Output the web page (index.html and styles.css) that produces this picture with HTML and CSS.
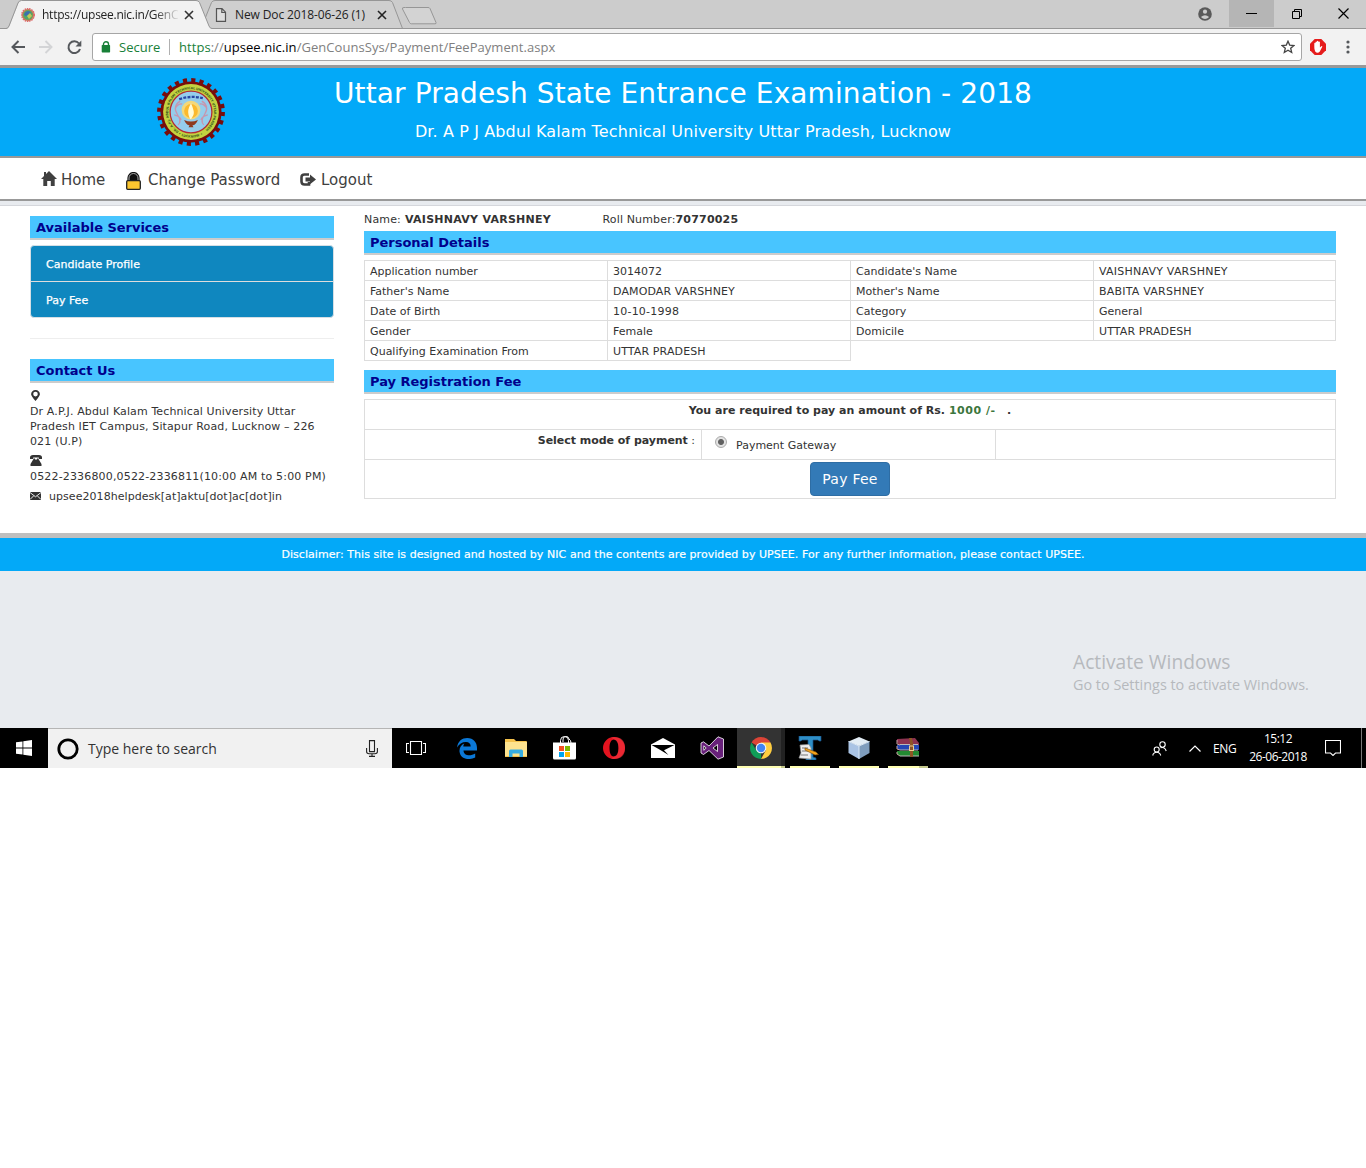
FILE: index.html
```html
<!DOCTYPE html>
<html lang="en">
<head>
<meta charset="utf-8">
<title>UPSEE 2018 - Fee Payment</title>
<link rel="stylesheet" href="styles.css">
</head>
<body>
<div class="desktop">
  <div class="tabstrip">
    <svg class="tab-shapes" width="450" height="29" viewBox="0 0 450 29">
      <path d="M201 28.500L211.500 2.500Q212.500.5 215 .5H389Q391.500.5 392.500 2.500L402.500 28.500" fill="#cfcfcf" stroke="#969696"/>
      <path d="M405.500 7.500H428Q429.500 7.500 430 8.500L436 22.500Q436.500 23.800 435 23.800H411.500Q410 23.800 409.500 22.500L402.500 9Q402 7.500 404 7.500Z" fill="#d3d3d3" stroke="#969696"/>
      <path d="M6 29Q8.500 28.500 9.500 26L18.500 3Q19.500 .5 22 .5H196Q198.500.5 199.500 2.500L209 26Q210 28.500 212 29Z" fill="#f2f2f2"/>
      <path d="M0 28.500H6Q8 28.500 9 26L18 3Q19 .5 21.500 .5H196Q198.500.5 199.500 2.500L209 26Q210 28.500 212 28.500H450" fill="none" stroke="#969696"/>
    </svg>
    <div class="tab tab-a">
      <svg width="16" height="16" viewBox="0 0 16 16"><circle cx="8" cy="8" r="6" fill="#8f9a4a" stroke="#e0696b" stroke-width="2" stroke-dasharray="1.500 .7"/><circle cx="8" cy="8" r="4.500" fill="#4fa46d"/><path d="M4 8Q5 4 9 4L11 6 6 9Z" fill="#3d70ae"/><path d="M7 9l3-3 2 3-3 3z" fill="#c2c957"/></svg>
      <span class="tab-title fade">https://upsee.nic.in/GenC</span>
      <svg width="10" height="10" viewBox="0 0 10 10"><path d="M1 1l8 8M9 1l-8 8" stroke="#333" stroke-width="1.600"/></svg>
    </div>
    <div class="tab tab-b">
      <svg width="12" height="14" viewBox="0 0 12 14"><path d="M1.500.7H7L10.500 4.200V13.300H1.500ZM6.800.7V4.500H10.500" fill="#dedede" stroke="#555" stroke-width="1.200"/></svg>
      <span class="tab-title">New Doc 2018-06-26 (1)</span>
      <svg width="10" height="10" viewBox="0 0 10 10"><path d="M1 1l8 8M9 1l-8 8" stroke="#222" stroke-width="1.600"/></svg>
    </div>
    <div class="winctl">
      <svg width="14" height="14" viewBox="0 0 14 14"><circle cx="7" cy="7" r="6.800" fill="#5a5a5a"/><circle cx="7" cy="4.700" r="2.100" fill="#ccc"/><path d="M2.900 9.900Q7 6.600 11.100 9.900Q7 14 2.900 9.900Z" fill="#ccc"/></svg>
      <span class="min"><i></i></span>
      <svg class="max" width="10" height="10" viewBox="0 0 10 10"><path d="M.5 2.500h7v7h-7zM2.500 2.500v-2h7v7h-2" fill="none" stroke="#000"/></svg>
      <svg class="close" width="11" height="11" viewBox="0 0 11 11"><path d="M.5.5l10 10M10.500.5l-10 10" stroke="#000" stroke-width="1.200"/></svg>
    </div>
  </div>
  <div class="toolbar">
    <svg width="14" height="14" viewBox="0 0 14 14"><path d="M14 7H1.500M7.500 1L1.500 7l6 6" fill="none" stroke="#55585c" stroke-width="2"/></svg>
    <svg width="14" height="14" viewBox="0 0 14 14"><path d="M0 7H12.500M6.500 1L12.500 7l-6 6" fill="none" stroke="#d3d4d6" stroke-width="1.900"/></svg>
    <svg width="15" height="15" viewBox="0 0 15 15"><path d="M13 9A5.900 5.900 0 1 1 12 3.500" fill="none" stroke="#55585c" stroke-width="2"/><path d="M14.300 .5V6.500H8.500Z" fill="#55585c"/></svg>
    <div class="omnibox">
      <svg width="10" height="12" viewBox="0 0 10 12"><path d="M2.500 5V3a2.500 2.200 0 0 1 5 0V5" fill="none" stroke="#188038" stroke-width="1.400"/><rect x=".7" y="4" width="8.400" height="7.500" rx=".7" fill="#188038"/></svg>
      <span class="secure">Secure</span>
      <span class="url"><span class="scheme">https</span>://<span class="host">upsee.nic.in</span>/GenCounsSys/Payment/FeePayment.aspx</span>
      <svg class="star" width="14" height="14" viewBox="0 0 14 14"><path d="M7 1.200L8.700 5.100 12.900 5.500 9.700 8.300 10.700 12.500 7 10.300 3.300 12.500 4.300 8.300 1.100 5.500 5.300 5.100Z" fill="none" stroke="#444" stroke-width="1.300"/></svg>
    </div>
    <svg class="stop" width="16" height="16" viewBox="0 0 16 16"><path d="M4.700 0h6.600L16 4.700v6.600L11.300 16H4.700L0 11.300V4.700Z" fill="#e51c1c"/><path d="M4.300 8V4.200q.6-.8 1.200 0V3q.7-.8 1.400 0V2.200q.8-.9 1.500 0V3q.8-.8 1.500 0V8.500l1.400-1.300q1-.4 1 .5L9.800 12.500Q7.500 15 5.200 12.500Q4.200 10.500 4.300 8Z" fill="#fff"/></svg>
    <svg class="dots" width="4" height="14" viewBox="0 0 4 14"><g fill="#55585c"><circle cx="2" cy="2" r="1.600"/><circle cx="2" cy="7" r="1.600"/><circle cx="2" cy="12" r="1.600"/></g></svg>
  </div>
  <header class="banner">
    <svg class="seal" width="70" height="70" viewBox="-35.500 -35.500 71 71">
      <circle r="32.300" fill="none" stroke="#780c0c" stroke-width="4.200" stroke-dasharray="4.200 4.256"/>
      <circle r="31" fill="#780c0c"/><circle r="28.300" fill="#c3d340"/><circle r="21.200" fill="#95cdec" stroke="#b32b36" stroke-width="1.300"/>
      <path id="ring" d="M-12.500 19.600A23.200 23.200 0 1 1 12.500 19.600" fill="none"/>
      <path id="ringb" d="M-13 22.500A26 26 0 0 0 13 22.500" fill="none"/>
      <text class="ringtext"><textPath href="#ring" textLength="116">DR. A.P.J. ABDUL KALAM TECHNICAL UNIVERSITY UTTAR PRADESH</textPath></text>
      <text class="ringtext"><textPath href="#ringb" textLength="26">• LUCKNOW •</textPath></text>
      <path d="M-11-11Q-19-6-14 2T-13 13M-16-4q4-5 7-4M-17 3q5 1 7 5M11-11Q19-6 14 2T13 13M16-4q-4-5-7-4M17 3q-5 1-7 5" fill="none" stroke="#c795ae" stroke-width="1.300"/>
      <path d="M-12-13Q0-17 12-14" fill="none" stroke="#2845a3" stroke-width="2.300" stroke-dasharray="3 1.300"/>
      <circle cy="-2" r="9.500" fill="#f4d87a"/><circle cy="-1" r="7" fill="#fbb92d"/><path d="M0-9Q-4-2-2.500 3T0 7T2.500 3T0-9Z" fill="#fffbd6"/>
      <path d="M-7 8Q0 11.500 7 8Q5 13 1.500 13.500L2.500 15.500H-2.500L-1.500 13.500Q-5 13-7 8Z" fill="#8e3a20"/>
    </svg>
    <div class="banner-text">
      <h1>Uttar Pradesh State Entrance Examination - 2018</h1>
      <h2>Dr. A P J Abdul Kalam Technical University Uttar Pradesh, Lucknow</h2>
    </div>
  </header>
  <nav class="menu">
    <svg class="home-icon" width="16" height="15" viewBox="0 0 16 15"><path d="M8 0L16 8H13.700V15H9.800V10H6.200V15H2.300V8H0L3 5V1H5V3Z" fill="#404040"/></svg>
    <span class="menu-home">Home</span>
    <svg class="lock-icon" width="15" height="18" viewBox="0 0 15 18"><path d="M3 9V6a4.500 4.500 0 0 1 9 0V9" fill="#111" stroke="#111" stroke-width="3.200"/><path d="M3 9V6a4.500 4.500 0 0 1 9 0V9" fill="none" stroke="#aaa" stroke-width="1"/><rect x=".7" y="8.700" width="13.600" height="8.600" rx="1" fill="#fcc62f" stroke="#222" stroke-width="1.300"/></svg>
    <span class="menu-password">Change Password</span>
    <svg class="logout-icon" width="16" height="13" viewBox="0 0 16 13"><path d="M9 1.500H4.500Q1.500 1.500 1.500 4.500V8.500Q1.500 11.500 4.500 11.500H9V9" fill="none" stroke="#404040" stroke-width="2.600"/><path d="M5.500 4.500H10V1.500L16 6.500 10 11.300V8.500H5.500Z" fill="#404040"/></svg>
    <span>Logout</span>
  </nav>
  <main class="page">
    <aside class="side">
      <h3>Available Services</h3>
      <ul class="services"><li>Candidate Profile</li><li>Pay Fee</li></ul>
      <hr>
      <h3>Contact Us</h3>
      <svg class="pin" width="9" height="11" viewBox="0 0 9 11"><path fill-rule="evenodd" d="M4.500 0A4.300 4.300 0 0 1 8.900 4.200Q8.900 6 4.500 11Q.1 6 .1 4.200A4.300 4.300 0 0 1 4.500 0ZM4.500 1.800A2.300 2.300 0 1 0 4.500 6.400A2.300 2.300 0 1 0 4.500 1.800Z" fill="#333"/></svg>
      <p class="address">Dr A.P.J. Abdul Kalam Technical University Uttar<br>Pradesh IET Campus, Sitapur Road, Lucknow – 226<br>021 (U.P)</p>
      <svg class="phone" width="12" height="11" viewBox="0 0 12 11"><path d="M0 4V2.500Q0 0 3 0H9Q12 0 12 2.500V4H8.800V2.500H3.200V4Z" fill="#333"/><path d="M3.800 3.500h1.200v1h2v-1h1.200L11.500 9V11H.5V9Z" fill="#333"/></svg>
      <p class="tel">0522-2336800,0522-2336811(10:00 AM to 5:00 PM)</p>
      <div class="mail"><svg width="11" height="8" viewBox="0 0 11 8"><rect width="11" height="8" fill="#333"/><path d="M0 .5L5.500 4.800 11 .5M0 7.500L3.700 3.800M11 7.500L7.300 3.800" stroke="#fff" stroke-width=".9" fill="none"/></svg><span>upsee2018helpdesk[at]aktu[dot]ac[dot]in</span></div>
    </aside>
    <section class="main">
      <div class="who"><span class="who-label">Name:</span><b class="who-name">VAISHNAVY VARSHNEY</b><span class="roll-label">Roll Number:</span><b class="roll">70770025</b></div>
      <h3>Personal Details</h3>
      <div class="details">
        <div>Application number</div><div>3014072</div><div>Candidate's Name</div><div class="caps">VAISHNAVY VARSHNEY</div>
        <div>Father's Name</div><div class="caps caps-tight">DAMODAR VARSHNEY</div><div>Mother's Name</div><div class="caps">BABITA VARSHNEY</div>
        <div>Date of Birth</div><div class="caps">10-10-1998</div><div>Category</div><div>General</div>
        <div>Gender</div><div>Female</div><div>Domicile</div><div class="caps caps-tight">UTTAR PRADESH</div>
        <div>Qualifying Examination From</div><div class="caps caps-tight">UTTAR PRADESH</div>
      </div>
      <h3 class="fee-title">Pay Registration Fee</h3>
      <div class="pay">
        <div class="amount"><b>You are required to pay an amount of Rs. <span class="green">1000 /-</span> &nbsp; .</b></div>
        <div class="mode"><div class="mode-label"><b>Select mode of payment</b> :</div><div class="mode-option"><i class="radio"></i><span>Payment Gateway</span></div><div></div></div>
        <div class="action"><button>Pay Fee</button></div>
      </div>
    </section>
  </main>
  <footer>Disclaimer: This site is designed and hosted by NIC and the contents are provided by UPSEE. For any further information, please contact UPSEE.</footer>
  <div class="watermark"><p class="wm-title">Activate Windows</p><p class="wm-text">Go to Settings to activate Windows.</p></div>
  <div class="taskbar">
    <div class="start"><svg width="16" height="16" viewBox="0 0 16 16"><path d="M0 2.300L6.500 1.400V7.500H0ZM7.300 1.300L16 0V7.500H7.300ZM0 8.400H6.500V14.600L0 13.700ZM7.300 8.400H16V16L7.300 14.700Z" fill="#fff"/></svg></div>
    <div class="search"><svg width="22" height="22" viewBox="0 0 22 22"><circle cx="11" cy="11" r="9.200" fill="none" stroke="#000" stroke-width="2.800"/></svg><span>Type here to search</span>
      <svg class="mic" width="12" height="17" viewBox="0 0 12 17"><path d="M3.500.6h5v11h-5zM.6 8v3.500q0 2.200 2.400 2.200h6q2.400 0 2.400-2.200V8M6 14v2.400M3 16.400h6" fill="none" stroke="#222" stroke-width="1.100"/></svg></div>
    <div class="taskview"><svg width="20" height="14" viewBox="0 0 20 14"><path d="M4.500.5h11v13h-11zM3 2.500H.5v9H3M17 2.500h2.500v9H17" fill="none" stroke="#fff" stroke-width="1.100"/></svg></div>
    <div class="apps">
      <div><svg width="20" height="21" viewBox="0 0 20 21"><path d="M0 9.500C1 3 5 0 10.200 0C16.500 0 20 4.500 20 10V12.500H6.500C6.800 18 13.500 18.500 18.200 15.500V19.500C12 22.500 3.500 21.500 2.500 13.500C2.200 9.500 4.500 6.800 7.300 5.600C6.600 6.600 6.300 7.600 6.300 8.600H13.700C13.700 5.500 12 4 9 4C5 4 2 6 0 9.500Z" fill="#0b78d7"/></svg></div>
      <div><svg width="22" height="18" viewBox="0 0 22 18"><path d="M0 0h9l2 2h10q1 0 1 1v15H0z" fill="#f5c24c"/><path d="M0 3h22v14H0z" fill="#fde38f"/><path d="M4 18v-6q0-1.500 1.500-1.500h11q1.500 0 1.500 1.500v6h-3.500v-3.500h-7V18z" fill="#37aee3"/></svg></div>
      <div><svg width="23" height="24" viewBox="0 0 23 24"><path d="M7.500 7V4.500a4 4 0 0 1 8 0V7M10 6V4a3 3 0 0 1 6-1q2 1 2 4" fill="none" stroke="#fff"/><path d="M0 6.500h23V22q0 1.500-1.500 1.500h-20Q0 23.500 0 22Z" fill="#fff"/><path fill="#f25022" d="M6 10h5v5H6z"/><path fill="#7fba00" d="M12 10h5v5h-5z"/><path fill="#00a4ef" d="M6 16h5v5H6z"/><path fill="#ffb900" d="M12 16h5v5h-5z"/></svg></div>
      <div><svg width="22" height="22" viewBox="0 0 22 22"><path fill-rule="evenodd" d="M11 0A11 11 0 0 1 11 22A11 11 0 0 1 11 0ZM11 2.500C8 2.500 6.500 6 6.500 11S8 19.500 11 19.500 15.500 16 15.500 11 14 2.500 11 2.500Z" fill="#e3131f"/><path d="M11 0Q22 0 22 11T11 22Q9 22 8 21.500L11 19.500Q15.500 18 15.500 11T11 2.500L8 .5Q9 0 11 0Z" fill="#f23a44" opacity=".55"/></svg></div>
      <div><svg width="24" height="20" viewBox="0 0 24 20"><path d="M0 6.500L12 0 24 6.500V20H0Z" fill="#fff"/><path d="M.5 7H23.500L13 12.300 17.500 17 8.500 11.500Z" fill="#000"/></svg></div>
      <div><svg width="24" height="24" viewBox="0 0 24 24"><path fill-rule="evenodd" d="M1 7L3.500 5.800 9 10 18 .8 23.500 3V21L18 23.200 9 14.500 3.500 18.500 1 17ZM3.800 9.800V14.300L6.200 12ZM13 12L17.500 15.500V8.500Z" fill="#68217a" stroke="#fff" stroke-width=".8"/></svg></div>
      <div class="active"><svg width="22" height="22" viewBox="0 0 22 22"><path d="M11 11L1.500 5.500A11 11 0 0 1 20.500 5.500Z" fill="#db4437"/><path d="M11 11L11 22A11 11 0 0 1 1.500 5.500L6 13Z" fill="#0f9d58"/><path d="M11 5.500H20.500A11 11 0 0 1 11 22L16 13Z" fill="#ffcd40"/><circle cx="11" cy="11" r="5.300" fill="#f4f4f4"/><circle cx="11" cy="11" r="4.200" fill="#4285f4"/></svg></div>
      <div class="running"><svg width="24" height="24" viewBox="0 0 24 24"><path d="M1 0H23V5H21L20 4H15V21L18 22V24H8V22L10 21V4H4L3 5H1Z" fill="#2e8fc7" stroke="#174f84" stroke-width=".7"/><path d="M2 9L11 8.500 13 12V23L1 22 3 17Z" fill="#eee" stroke="#999" stroke-width=".7"/><path d="M4 12h6M4 15h7M3 19h7" stroke="#777"/><path d="M7 12L18 16 20.500 18.500 17 19 7 14Z" fill="#f5a51c" stroke="#7a4708" stroke-width=".6"/></svg></div>
      <div class="running"><svg width="22" height="24" viewBox="0 0 22 24"><path d="M11 1L21.500 5.500 11 10 .5 5.500Z" fill="#e3edf5"/><path d="M.5 5.500L11 10V23L.5 17Z" fill="#a9c3e4"/><path d="M21.500 5.500L11 10V23L21.500 17Z" fill="#7f9dbd"/><path d="M.5 5.500L11 10 21.500 5.500M11 10V23" fill="none" stroke="#d8e6f5"/></svg></div>
      <div class="running grouped"><svg width="24" height="20" viewBox="0 0 24 20"><path d="M1 1L19 0 23 5V7H3L1 4Z" fill="#8d3350"/><path d="M1 7H23V12H3L1 10Z" fill="#2447b4"/><path d="M1 13H23V18H4L1 16Z" fill="#238a32"/><path d="M4 6.500H22M4 12H22M4 18H23" stroke="#b9b9b9"/><path d="M1 2V6L4 7M1 8V11L4 12M1 14V16L4 18" fill="none" stroke="#c8a4a4"/><path d="M13 0H16L17 5V19H14V5Z" fill="#8e5526"/><rect x="13.500" y="8" width="4" height="4.500" fill="none" stroke="#e9cf93"/></svg></div>
    </div>
    <div class="tray">
      <svg width="15" height="15" viewBox="0 0 15 15"><g fill="none" stroke="#fff" stroke-width="1.100"><circle cx="10.500" cy="3.500" r="2.700"/><circle cx="4.700" cy="8.500" r="2.500"/><path d="M.7 14.500q.8-3.200 4-3.200t4 3.200M8.500 6.800q4.300-1.200 5.700 3.200"/></g></svg>
      <svg class="chev" width="12" height="7" viewBox="0 0 12 7"><path d="M.5 6.500L6 1l5.500 5.500" fill="none" stroke="#fff" stroke-width="1.200"/></svg>
      <span class="lang">ENG</span>
      <div class="clock">15:12<br>26-06-2018</div>
      <svg class="note" width="16" height="16" viewBox="0 0 16 16"><path d="M.5.5h15v12.500H10.500L8 15.500 5.500 13H.5Z" fill="none" stroke="#fff" stroke-width="1.100"/></svg>
      <i class="peek"></i>
    </div>
  </div>
</div>
</body>
</html>
```
FILE: styles.css
```css
*{box-sizing:border-box}
body{margin:0;background:#fff;font:11px/15px "DejaVu Sans",sans-serif;color:#333}
svg{display:block;flex:none}
h1,h2,h3,p,ul{margin:0;padding:0;font-weight:400}
.desktop{height:768px;background:#e8ebef;display:flex;flex-direction:column;position:relative;white-space:nowrap}

/* browser window */
.tabstrip{height:29px;background:#ccc;border-bottom:1px solid #969696;position:relative;display:flex}
.tab-shapes{position:absolute;left:0;top:0}
.tab{display:flex;align-items:center;position:relative;height:29px}
.tab-a{margin-left:20px;width:176px}
.tab-b{margin-left:19px;width:175px}
.tab-title{font:12px/16px "Open Sans",sans-serif;letter-spacing:-.12px;color:#222;margin-left:8px;width:142px;overflow:hidden}
.tab-a .tab-title{margin-left:6px;letter-spacing:-.25px}
.fade{-webkit-mask-image:linear-gradient(90deg,#000 112px,transparent 138px);mask-image:linear-gradient(90deg,#000 112px,transparent 138px)}
.winctl{margin-left:auto;display:flex;align-items:center;height:27px;padding-right:17px}
.min{width:45px;height:27px;background:#b5b5b5;margin:0 18px 0 17px;display:flex;align-items:center;justify-content:center}
.min i{width:11px;height:1px;background:#000}
.close{margin-left:36px}
.toolbar{height:39px;background:#f2f2f2;border-bottom:3px solid #999;display:flex;align-items:center;gap:14px;padding:0 16px 0 11px}
.omnibox{display:flex;align-items:center;flex:1;height:28px;background:#fff;border:1px solid #a6a6a6;border-radius:3px;margin-left:-4px;padding:0 6px 0 8px;font:13px/18px "Open Sans",sans-serif}
.secure{color:#188038;margin-left:8px;width:51px;border-right:1px solid #b0b0b0;line-height:16px}
.url{margin-left:9px;color:#808080;letter-spacing:.05px}
.scheme{color:#188038}
.host{color:#000}
.star{margin-left:auto}
.stop{margin-left:-6px}
.dots{margin-left:6px}

/* site header */
.banner{height:90px;background:#03a9f8;border-bottom:2px solid #999;color:#fff;display:grid;grid-template-columns:226px 1fr 226px}
.seal{margin:9px 0 0 156px}
.ringtext{font-size:3.300px;font-weight:700;fill:#3b5b1d}
.banner-text{text-align:center}
h1{font-size:28px;line-height:34px;letter-spacing:.11px;padding-top:9px}
h2{font-size:16px;line-height:20px;letter-spacing:.12px;margin-top:11px}
.menu{height:43px;background:#fff;border-bottom:2px solid #999;display:flex;align-items:center;padding:2px 0 0 41px;font-size:15px;color:#404040}
.menu .home-icon{margin-top:-2px}
.menu .lock-icon{margin-top:2px}
.menu span{margin:2px 0 0 5px}
.menu .menu-home{width:65px;margin-left:4px}
.menu .menu-password{margin-left:7px;width:152px}

/* page body */
.page{height:328px;margin-top:4px;background:#fff;border-top:1px solid #d5d7dc;display:flex;padding-left:30px;gap:30px}
h3{height:24px;background:#48c5ff;border-bottom:2px solid #ccc;color:#00008b;font-size:13px;line-height:23px;font-weight:700;padding-left:6px;letter-spacing:-.02px}
.side{width:304px;padding-top:10px}
.services{margin-top:5px;border:1px solid #d5dfe5;border-radius:4px;background:#0f87bf;color:#fff;list-style:none;overflow:hidden;-webkit-text-stroke:.25px #fff}
.services li{height:35px;padding:11px 0 0 15px}
.services li+li{height:36px;border-top:1px solid #ddd}
hr{border:0;height:1px;background:#eee;margin:20px 0}
.pin{margin:7px 0 0 1px}
.address{margin-top:3px;letter-spacing:.12px}
.phone{margin-top:6px}
.tel{margin-top:3px;letter-spacing:.162px}
.mail{display:flex;align-items:center;gap:8px;margin-top:5px;letter-spacing:.053px}
.mail svg{margin-top:-2px}
.main{width:972px;padding-top:6px}
.who{height:19px;display:flex;letter-spacing:.15px}
.who-label{width:41px}
.who-name{width:197.500px;letter-spacing:.26px}
.roll-label{width:73px}
.roll{letter-spacing:.2px}
.details{margin-top:5px;display:grid;grid-template-columns:243px 243px 243px 242px;border-left:1px solid #ddd}
.details div{height:20px;border:solid #ddd;border-width:0 1px 1px 0;padding:1px 0 0 5px;line-height:19px}
.details div:nth-child(-n+4){height:21px;border-top-width:1px}
.caps{letter-spacing:.22px}
.caps-tight{letter-spacing:.12px}
.fee-title{margin-top:9px}
.pay{margin-top:5px;border:solid #ddd;border-width:1px 1px 0}
.amount,.mode,.action{border-bottom:1px solid #ddd;height:30px}
.amount{text-align:center;padding-top:3px;letter-spacing:.02px}
.green{color:#3c763d;letter-spacing:.5px}
.mode{display:grid;grid-template-columns:337px 294px 1fr}
.mode-label{text-align:right;padding:3px 6px 0 0;border-right:1px solid #ddd;letter-spacing:-.03px}
.mode-option{display:flex;border-right:1px solid #ddd;padding:8px 0 0 13px}
.mode-option span{margin-left:9px}
.radio{width:12px;height:12px;border:1px solid #aaa;border-radius:50%;background:radial-gradient(circle,#606060 0 2.500px,#e2e2e2 3.500px);margin-top:-2px}
.action{height:39px;padding-top:2px;text-align:center}
button{display:block;margin:0 auto;width:80px;height:34px;padding:0;border:1px solid #2e6da4;border-radius:4px;background:#337ab7;color:#fff;font:14px/32px "DejaVu Sans",sans-serif;letter-spacing:.25px}
footer{height:38px;border-top:5px solid #bfbfbf;background:#03a9f8;color:#fff;text-align:center;padding-top:9px;letter-spacing:.06px;-webkit-text-stroke:.2px #fff}
.watermark{position:absolute;left:1073px;top:649px;color:#b6b9bd;font-family:"Open Sans",sans-serif}
.wm-title{font-size:19.200px;line-height:26px}
.wm-text{font-size:14.400px;line-height:20px}

/* taskbar */
.taskbar{background:#000;display:flex;height:40px;margin-top:auto;color:#fff;font-family:"Open Sans",sans-serif}
.start{width:48px;display:flex;align-items:center;justify-content:center}
.search{width:344px;background:#f1f1f1;border-top:1px solid #b5b5b5;display:flex;align-items:center;padding:0 14px 0 9px;font-size:14px;color:#333}
.search span{margin-left:9px}
.mic{margin-left:auto}
.taskview{width:51px;padding-left:14px;display:flex;align-items:center}
.apps{display:flex}
.apps div{width:49px;display:flex;align-items:center;justify-content:center;padding-right:2px}
.apps .active{background:linear-gradient(90deg,#333 44px,#222 44px) no-repeat 0 0/48px 38px,linear-gradient(90deg,#ffffb3 44px,#c5c98c 44px) no-repeat 0 38px/48px 2px}
.apps .running{background:linear-gradient(#ffffb3,#ffffb3) no-repeat 4px 38px/40px 2px}
.apps .grouped{background-image:linear-gradient(90deg,#ffffb3 31px,#c5c98c 31px)}
.tray{margin-left:auto;display:flex;align-items:center}
.chev{margin-left:22px}
.lang{margin-left:12px;font-size:12px;width:23px;letter-spacing:-.3px}
.clock{margin-left:12px;width:60px;text-align:center;font-size:12px;line-height:18px;letter-spacing:-.5px}
.note{margin-left:17px}
.peek{width:1px;height:40px;background:#777;margin:0 4px 0 20px}
```
